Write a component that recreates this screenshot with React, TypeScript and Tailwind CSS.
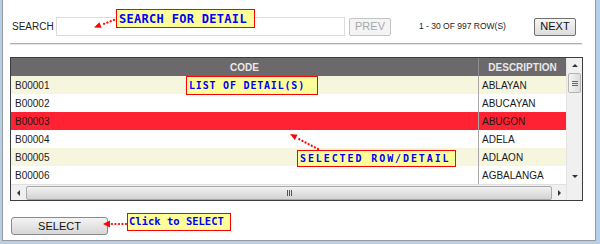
import React from "react";

const rows = [
  { code: "B00001", desc: "ABLAYAN", bg: "bg-[#f6f6df]" },
  { code: "B00002", desc: "ABUCAYAN", bg: "bg-white" },
  { code: "B00003", desc: "ABUGON", bg: "bg-[#fe2233]" },
  { code: "B00004", desc: "ADELA", bg: "bg-white" },
  { code: "B00005", desc: "ADLAON", bg: "bg-[#f6f6df]" },
  { code: "B00006", desc: "AGBALANGA", bg: "bg-white" },
];

const sans = { fontFamily: '"Liberation Sans", Arial, sans-serif' };
const mono = { fontFamily: '"DejaVu Sans Mono", "Liberation Mono", monospace' };

export default function App() {
  return (
    <div className="relative w-[600px] h-[244px] bg-[#b6cfea] pl-[2px] pr-[4px] pb-[3px]" style={sans}>
      <div className="w-full h-full bg-white border-l border-r border-b border-[#9a9a9a] pl-[7px] pr-[11px] flex flex-col">
        {/* search row */}
        <div className="mt-[17px] h-[19px] flex items-center">
          <span className="ml-[2px] w-[44px] text-[10px] text-[#222]">SEARCH</span>
          <div className="w-[289px] h-[19px] border border-[#dcdcdc] bg-white" />
          <div className="ml-[4px] w-[42px] h-[18px] border border-[#c4c4c4] rounded-[2px] bg-[#f4f4f4] flex items-center justify-center text-[11px] text-[#a8a8a8]">
            PREV
          </div>
          <span className="ml-[28px] w-[115px] text-[8.5px] text-[#222] whitespace-nowrap">1 - 30 OF 997 ROW(S)</span>
          <div className="w-[42px] h-[18px] border border-[#707070] rounded-[2px] bg-gradient-to-b from-[#f6f6f6] to-[#dcdcdc] flex items-center justify-center text-[11px] text-[#111]">
            NEXT
          </div>
        </div>
        {/* hr */}
        <div className="mt-[7px] w-[572px] h-[2px] border-t border-[#b0b0b0] border-b border-b-[#e6e6e6]" />
        {/* table */}
        <div className="mt-[12px] w-[573px] h-[144px] border border-[#3c3c3c] flex">
          <div className="w-[555px] flex flex-col">
            <div className="h-[18px] bg-[#6c696c] flex text-[10px] font-bold text-[#e8e8e8]">
              <div className="w-[467px] flex items-center justify-center">CODE</div>
              <div className="w-[88px] border-l border-[#8e8c8e] flex items-center justify-center">DESCRIPTION</div>
            </div>
            {rows.map((r) => (
              <div key={r.code} className={`h-[18px] flex text-[10px] text-[#1a1a1a] ${r.bg}`}>
                <div className="w-[467px] pl-[4px] flex items-center">{r.code}</div>
                <div className="w-[88px] border-l border-[#a8a8a8] pl-[3px] flex items-center">{r.desc}</div>
              </div>
            ))}
            {/* horizontal scrollbar */}
            <div className="h-[16px] bg-[#f0f0f0] border-t border-[#e0e0e0] flex items-center">
              <div className="w-[15px] flex items-center justify-center">
                <div className="w-0 h-0 border-y-[3px] border-y-transparent border-r-[3px] border-r-[#333]" />
              </div>
              <div className="w-[526px] h-[14px] rounded-[2px] border border-[#a9a9a9] bg-gradient-to-b from-[#f2f2f2] to-[#d2d2d2] flex items-center justify-center">
                <div className="flex gap-[1px]">
                  <div className="w-[1px] h-[6px] bg-[#555]" />
                  <div className="w-[1px] h-[6px] bg-[#555]" />
                  <div className="w-[1px] h-[6px] bg-[#555]" />
                </div>
              </div>
              <div className="flex-1 flex items-center justify-center">
                <div className="w-0 h-0 border-y-[3px] border-y-transparent border-l-[3px] border-l-[#333]" />
              </div>
            </div>
          </div>
          {/* vertical scrollbar */}
          <div className="w-[16px] flex flex-col bg-[#f0f0f0] border-l border-[#e2e2e2]">
            <div className="h-[15px] flex items-center justify-center">
              <div className="w-0 h-0 border-x-[3px] border-x-transparent border-b-[3px] border-b-[#333]" />
            </div>
            <div className="mx-[1px] h-[20px] rounded-[2px] border border-[#b4b4b4] bg-gradient-to-r from-[#f4f4f4] to-[#dcdcdc] flex flex-col items-center justify-center gap-[1px]">
              <div className="w-[6px] h-[1px] bg-[#666]" />
              <div className="w-[6px] h-[1px] bg-[#666]" />
              <div className="w-[6px] h-[1px] bg-[#666]" />
            </div>
            <div className="flex-1" />
            <div className="h-[15px] flex items-center justify-center">
              <div className="w-0 h-0 border-x-[3px] border-x-transparent border-t-[3px] border-t-[#333]" />
            </div>
            <div className="h-[16px] bg-[#f0f0f0]" />
          </div>
        </div>
        {/* select */}
        <div className="mt-[16px] ml-[1px] w-[97px] h-[18px] border border-[#8a8a8a] rounded-[3px] bg-gradient-to-b from-[#f4f4f4] to-[#d6d6d6] flex items-center justify-center text-[11px] text-[#111]">
          SELECT
        </div>
      </div>

      {/* annotations */}
      <div className="absolute left-[116px] top-[9px] w-[139px] h-[19px] bg-[#ffff99] border border-[#ff0000] flex items-center pl-[2px] text-[12px] font-bold text-[#0000ff] tracking-[0.3px] whitespace-nowrap" style={mono}>
        SEARCH FOR DETAIL
      </div>
      <div className="absolute left-[186px] top-[76px] w-[132px] h-[19px] bg-[#ffff99] border border-[#ff0000] flex items-center pl-[2px] text-[10px] font-bold text-[#0000ff] tracking-[0.8px] whitespace-nowrap" style={mono}>
        LIST OF DETAIL(S)
      </div>
      <div className="absolute left-[297px] top-[150px] w-[159px] h-[17px] bg-[#ffff99] border border-[#ff0000] flex items-center pl-[2px] text-[10px] font-bold text-[#0000ff] tracking-[1.9px] whitespace-nowrap" style={mono}>
        SELECTED ROW/DETAIL
      </div>
      <div className="absolute left-[127px] top-[213px] w-[104px] h-[18px] bg-[#ffff99] border border-[#ff0000] flex items-center pl-[1px] text-[10.5px] font-bold text-[#0000ff] whitespace-nowrap" style={mono}>
        Click to SELECT
      </div>
      <svg className="absolute left-0 top-0 pointer-events-none" width="600" height="244" viewBox="0 0 600 244">
        <g stroke="#ff0000" strokeWidth="2.2" strokeLinecap="round" strokeDasharray="0.1 3.4" fill="none">
          <line x1="114" y1="20" x2="101" y2="25" />
          <line x1="318" y1="149" x2="297" y2="138" />
          <line x1="126" y1="224" x2="110" y2="224" />
        </g>
        <g fill="#ff0000">
          <polygon points="94,27.5 101.6,27.8 99.4,22.2" />
          <polygon points="290,134 297.6,134.7 294.8,139.9" />
          <polygon points="103,224 110,220.5 110,227.5" />
        </g>
      </svg>
    </div>
  );
}
